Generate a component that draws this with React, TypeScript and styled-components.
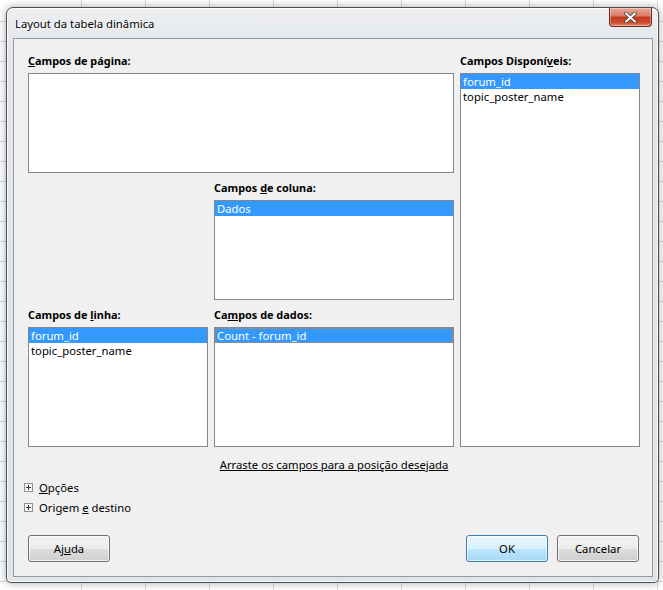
import React from "react";
import styled, { createGlobalStyle } from "styled-components";

const GlobalStyle = createGlobalStyle`
  html, body {
    margin: 0;
    padding: 0;
    width: 663px;
    height: 590px;
    overflow: hidden;
  }
  body {
    font-family: "Noto Sans", "Open Sans", sans-serif;
    font-size: 11.3px;
    color: #000;
    background-color: #ffffff;
    background-image:
      repeating-linear-gradient(to right, transparent 0 63px, #d9d9d9 63px 64px),
      repeating-linear-gradient(to bottom, transparent 0 19px, #d9d9d9 19px 20px);
    background-position: 18px 0, 0 2px;
  }
`;

const Desktop = styled.div`
  width: 663px;
  height: 590px;
  padding: 7px 0 0 6px;
  box-sizing: border-box;
`;

const Window = styled.div`
  width: 653px;
  height: 576px;
  box-sizing: border-box;
  border: 1px solid #4a4f55;
  border-radius: 7px 7px 5px 5px;
  background: linear-gradient(to bottom, #eef0f2 0%, #e3e6e9 6%, #e1e4e7 100%);
  box-shadow: 0 0 8px rgba(0, 0, 0, 0.35), inset 0 0 0 1px rgba(255, 255, 255, 0.8);
  padding: 0 5px 5px 6px;
  display: flex;
  flex-direction: column;
`;

const TitleBar = styled.div`
  height: 30px;
  display: flex;
  align-items: flex-start;
  justify-content: space-between;
`;

const Title = styled.span`
  font-size: 11.3px;
  line-height: 16px;
  margin: 8px 0 0 2px;
  color: #000;
  text-shadow: 0 0 6px #fff, 0 0 3px #fff;
`;

const CloseButton = styled.div`
  width: 43px;
  height: 19px;
  margin-right: 1px;
  box-sizing: border-box;
  border: 1px solid #6b2a1c;
  border-top: none;
  border-radius: 0 0 4px 4px;
  background: linear-gradient(
    to bottom,
    #e9a99b 0%,
    #d77a64 45%,
    #c2391c 50%,
    #cc4a2c 80%,
    #e0866b 100%
  );
  box-shadow: inset 0 0 0 1px rgba(255, 255, 255, 0.35);
  display: flex;
  align-items: center;
  justify-content: center;
`;

const Client = styled.div`
  flex: 1;
  background: #f0f0f0;
  border: 1px solid #8e9aa6;
  padding: 16px 13px 14px 14px;
  display: flex;
  flex-direction: column;
`;

const FieldsGrid = styled.div`
  display: grid;
  grid-template-columns: 180px 240px 180px;
  grid-template-rows: 18px 100px 27px 100px 27px 120px;
  column-gap: 6px;
  grid-template-areas:
    "pl pl al"
    "pb pb ab"
    ". cl ab"
    ". cb ab"
    "rl dl ab"
    "rb db ab";
`;

const Label = styled.div<{ $area: string }>`
  grid-area: ${(p) => p.$area};
  align-self: end;
  font-weight: bold;
  font-size: 10.9px;
  line-height: 16px;
  padding-bottom: 4px;
  white-space: nowrap;
`;

const ListBox = styled.div<{ $area: string }>`
  grid-area: ${(p) => p.$area};
  background: #fff;
  border: 1px solid #828790;
  box-sizing: border-box;
  overflow: hidden;
`;

const Item = styled.div<{ $selected?: boolean; $focused?: boolean }>`
  height: 15px;
  box-sizing: border-box;
  white-space: nowrap;
  background: ${(p) => (p.$selected ? "#3399ff" : "transparent")};
  color: ${(p) => (p.$selected ? "#fff" : "#000")};
  border: ${(p) => (p.$focused ? "1px dotted #d9822b" : "none")};
  padding-left: ${(p) => (p.$focused ? "1px" : "2px")};
  line-height: ${(p) => (p.$focused ? "13px" : "15px")};
`;

const Hint = styled.div`
  margin-top: 10px;
  padding-left: 186px;
  width: 240px;
  text-align: center;
  text-decoration: underline;
  line-height: 16px;
  white-space: nowrap;
`;

const Expanders = styled.div`
  margin-top: 4px;
  margin-left: -4px;
  display: flex;
  flex-direction: column;
`;

const Expander = styled.div`
  height: 20px;
  display: flex;
  align-items: center;
  gap: 6px;
`;

const PlusBox = styled.span`
  width: 9px;
  height: 9px;
  display: inline-flex;
`;

const Footer = styled.div`
  margin-top: auto;
  display: flex;
  align-items: center;
  gap: 9px;
`;

const Spacer = styled.div`
  flex: 1;
`;

const Button = styled.button<{ $default?: boolean }>`
  width: 82px;
  height: 27px;
  font-family: inherit;
  font-size: 11.3px;
  color: #000;
  border-radius: 3px;
  border: 1px solid ${(p) => (p.$default ? "#3c7fb1" : "#707070")};
  background: ${(p) =>
    p.$default
      ? "linear-gradient(to bottom, #eaf6fd 0%, #d9f0fc 50%, #bee6fd 51%, #a7d9f5 100%)"
      : "linear-gradient(to bottom, #f2f2f2 0%, #ebebeb 50%, #dddddd 51%, #cfcfcf 100%)"};
  box-shadow: inset 0 0 0 1px
    ${(p) => (p.$default ? "rgba(255,255,255,0.6)" : "rgba(255,255,255,0.7)")};
  padding: 0;
`;

const Plus = () => (
  <PlusBox>
    <svg width="9" height="9" viewBox="0 0 9 9">
      <rect x="0.5" y="0.5" width="8" height="8" fill="#f7f7f7" stroke="#8f8f8f" />
      <path d="M2 4.5h5M4.5 2v5" stroke="#333" strokeWidth="1" />
    </svg>
  </PlusBox>
);

const CloseGlyph = () => (
  <svg width="13" height="11" viewBox="0 0 13 11">
    <path
      d="M2 1.5l9 8M11 1.5l-9 8"
      stroke="#3b3b3b"
      strokeWidth="3.6"
      strokeLinecap="round"
    />
    <path
      d="M2 1.5l9 8M11 1.5l-9 8"
      stroke="#ffffff"
      strokeWidth="2"
      strokeLinecap="round"
    />
  </svg>
);

export default function App() {
  return (
    <>
      <GlobalStyle />
      <Desktop>
        <Window>
          <TitleBar>
            <Title>Layout da tabela dinâmica</Title>
            <CloseButton>
              <CloseGlyph />
            </CloseButton>
          </TitleBar>
          <Client>
            <FieldsGrid>
              <Label $area="pl">
                <u>C</u>ampos de página:
              </Label>
              <ListBox $area="pb" />

              <Label $area="al">
                Campos Disponí<u>v</u>eis:
              </Label>
              <ListBox $area="ab">
                <Item $selected>forum_id</Item>
                <Item>topic_poster_name</Item>
              </ListBox>

              <Label $area="cl">
                Campos <u>d</u>e coluna:
              </Label>
              <ListBox $area="cb">
                <Item $selected>Dados</Item>
              </ListBox>

              <Label $area="rl">
                Campos de <u>l</u>inha:
              </Label>
              <ListBox $area="rb">
                <Item $selected>forum_id</Item>
                <Item>topic_poster_name</Item>
              </ListBox>

              <Label $area="dl">
                Ca<u>m</u>pos de dados:
              </Label>
              <ListBox $area="db">
                <Item $selected $focused>
                  Count - forum_id
                </Item>
              </ListBox>
            </FieldsGrid>

            <Hint>Arraste os campos para a posição desejada</Hint>

            <Expanders>
              <Expander>
                <Plus />
                <span>
                  <u>O</u>pções
                </span>
              </Expander>
              <Expander>
                <Plus />
                <span>
                  Origem <u>e</u> destino
                </span>
              </Expander>
            </Expanders>

            <Footer>
              <Button>
                Aj<u>u</u>da
              </Button>
              <Spacer />
              <Button $default>OK</Button>
              <Button>Cancelar</Button>
            </Footer>
          </Client>
        </Window>
      </Desktop>
    </>
  );
}
